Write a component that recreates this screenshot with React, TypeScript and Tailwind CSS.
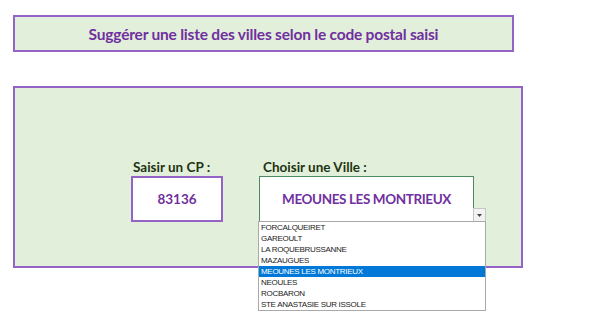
const villes = [
  "FORCALQUEIRET",
  "GAREOULT",
  "LA ROQUEBRUSSANNE",
  "MAZAUGUES",
  "MEOUNES LES MONTRIEUX",
  "NEOULES",
  "ROCBARON",
  "STE ANASTASIE SUR ISSOLE",
];

export default function App() {
  const selected = "MEOUNES LES MONTRIEUX";

  return (
    <div className="w-[600px] h-[320px] bg-white overflow-hidden flex flex-col font-['Lato',sans-serif]">
      {/* titre */}
      <div className="ml-[13px] mt-[15px] w-[501px] h-[37px] border-2 border-[#9563c6] bg-[#e2efda] flex items-center justify-center pt-[2px]">
        <h1 className="text-[15.5px] font-bold text-[#7030a0] tracking-[-0.2px]">
          Suggérer une liste des villes selon le code postal saisi
        </h1>
      </div>

      {/* zone de saisie */}
      <div className="ml-[13px] mt-[34px] w-[510px] h-[182px] border-2 border-[#9563c6] bg-[#e2efda] pt-[70px] pl-[116px] flex gap-[36px]">
        <div className="flex flex-col">
          <span className="pl-[2px] h-[18px] text-[13.5px] font-bold text-[#1e3412] leading-[18px]">
            Saisir un CP :
          </span>
          <div className="w-[92px] h-[46px] border-2 border-[#9563c6] bg-white flex items-center justify-center">
            <span className="text-[13.5px] font-bold text-[#7030a0]">83136</span>
          </div>
        </div>

        <div className="flex flex-col">
          <span className="pl-[4px] h-[18px] text-[13.5px] font-bold text-[#1e3412] leading-[18px]">
            Choisir une Ville :
          </span>
          <div className="relative w-[215px] h-[46px] border-[1.5px] border-[#4c8a60] bg-white flex items-center justify-center">
            <span className="text-[13.5px] font-bold text-[#7030a0] tracking-[-0.4px]">{selected}</span>
            <div className="absolute right-[-4px] bottom-[-4px] w-[5px] h-[5px] bg-[#1e6b3c] border border-white" />

            {/* bouton liste */}
            <div className="absolute left-[213px] top-[31px] w-[13px] h-[14px] bg-[#f3f3f3] border border-[#c6c6c6] flex items-center justify-center">
              <svg width="5" height="3" viewBox="0 0 5 3">
                <path d="M0 0h5L2.5 3z" fill="#444" />
              </svg>
            </div>

            {/* liste déroulante */}
            <div className="absolute left-[-2px] top-[44px] w-[228px] bg-white border border-[#a9a9a9] flex flex-col z-10 font-['Liberation_Sans',sans-serif]">
              {villes.map((v) => (
                <div
                  key={v}
                  className={`h-[11px] pl-[2px] text-[8px] leading-[11px] tracking-[-0.3px] whitespace-nowrap ${
                    v === selected ? "bg-[#0078d7] text-white" : "text-[#222]"
                  }`}
                >
                  {v}
                </div>
              ))}
            </div>
          </div>
        </div>
      </div>
    </div>
  );
}
